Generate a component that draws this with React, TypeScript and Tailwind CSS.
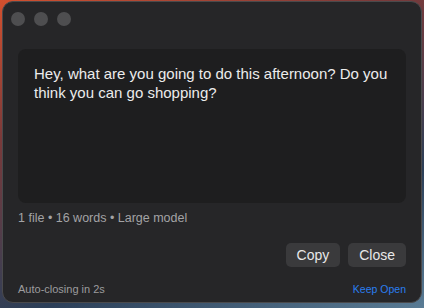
import React from "react";

// Small transcript popup window, macOS style
function TrafficLights() {
  return (
    <div className="flex items-center gap-[9px] h-[33px] pl-[8px]">
      <span className="w-[14px] h-[14px] rounded-full bg-[#4e4e50]" />
      <span className="w-[14px] h-[14px] rounded-full bg-[#4e4e50]" />
      <span className="w-[14px] h-[14px] rounded-full bg-[#4e4e50]" />
    </div>
  );
}

function Button({ label }: { label: string }) {
  return (
    <button className="h-[24px] px-[11px] rounded-[5px] bg-[#3a3a3c] text-[14px] text-[#e8e8e8] leading-none">
      {label}
    </button>
  );
}

export default function App() {
  return (
    <div
      className="w-[424px] h-[308px] overflow-hidden bg-[linear-gradient(160deg,#d4502e_0%,#7a3a3a_30%,#2c3f58_70%,#5a7c95_100%)] pl-[2px] pt-[1px]"
      style={{ fontFamily: "'Liberation Sans', Arial, sans-serif" }}
    >
      <div className="w-[420px] h-[302px] rounded-[11px] bg-[#262628] border border-[#4a4a4c] flex flex-col">
        <TrafficLights />

        {/* Transcript area */}
        <div className="mx-[15px] mt-[14px] h-[154px] rounded-[8px] bg-[#1e1e1f] px-4 pt-[15px]">
          <p className="text-[15px] leading-[19px] text-[#ececec]">
            Hey, what are you going to do this afternoon? Do you think you can go shopping?
          </p>
        </div>

        <div className="mx-[15px] mt-[8px] text-[12.5px] leading-[15px] text-[#a3a3a5]">
          1 file • 16 words • Large model
        </div>

        <div className="flex justify-end gap-2 mx-[15px] mt-[17px]">
          <Button label="Copy" />
          <Button label="Close" />
        </div>

        <div className="flex items-center justify-between mx-[15px] mt-[16px] leading-[13px]">
          <span className="text-[11px] text-[#9c9c9e]">Auto-closing in 2s</span>
          <span className="text-[10.5px] text-[#2a7ef0]">Keep Open</span>
        </div>
      </div>
    </div>
  );
}
